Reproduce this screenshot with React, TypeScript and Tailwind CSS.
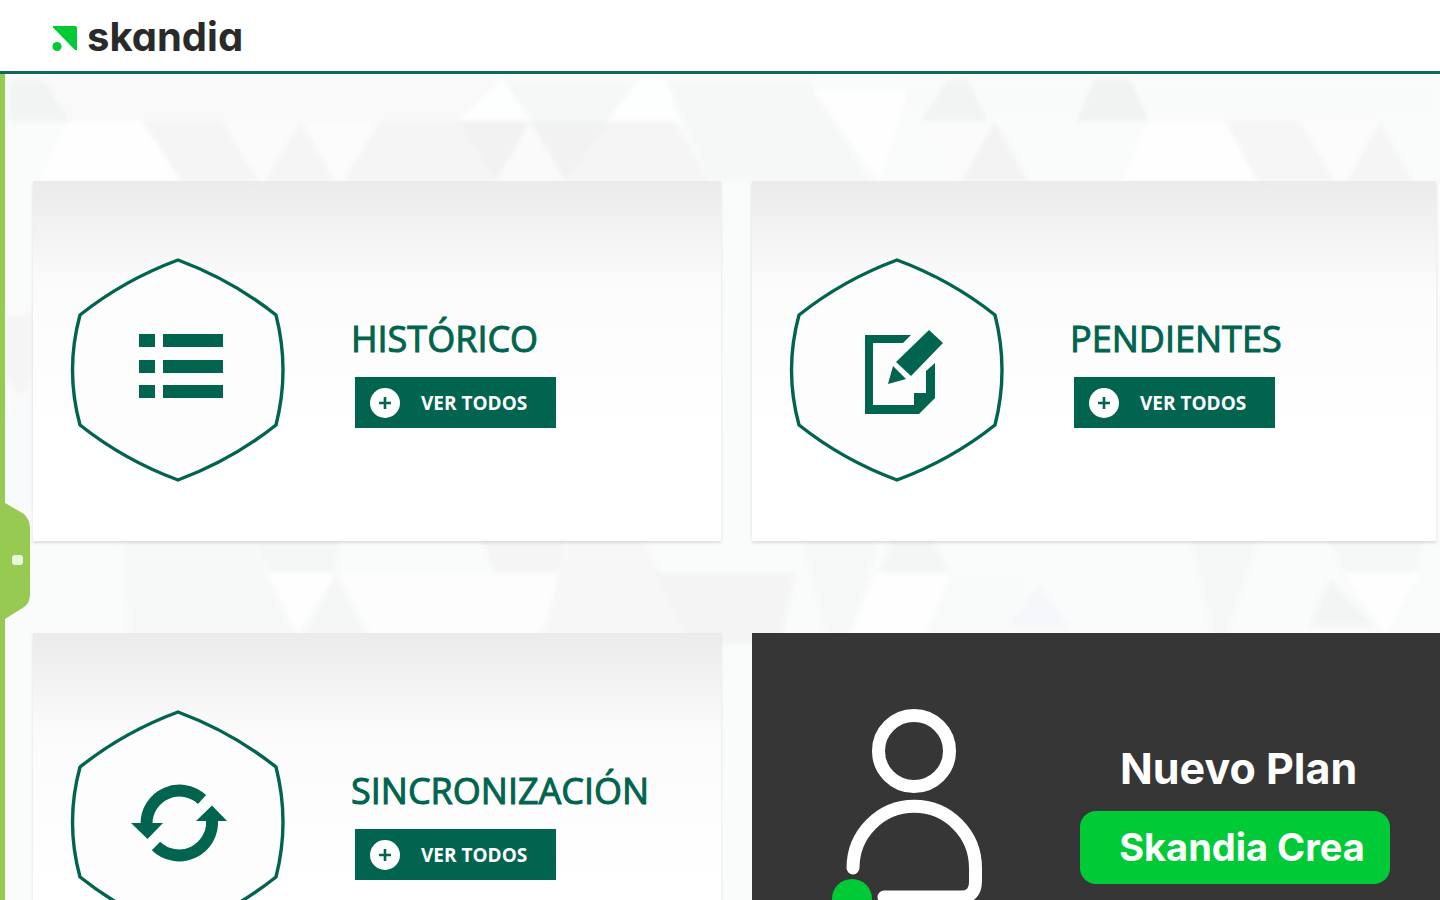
import type { ReactNode } from "react";

const facets: [string, string][] = [
  ["10,6 44,6 70,47 10,47", "#f1f4f3"],
  ["44,6 504,6 460,47 70,47", "#f9f9f9"],
  ["504,4 531,47 458,47", "#fdfefe"],
  ["504,6 640,6 610,47 531,47", "#f6f8f8"],
  ["640,4 665,4 680,47 607,47", "#fdfefe"],
  ["665,6 810,6 870,107 710,107", "#f6f8f8"],
  ["908,6 1440,6 1440,47 890,47", "#f9fafa"],
  ["68,47 142,47 181,107 40,107", "#fefefe"],
  ["142,47 222,47 260,107 181,107", "#f5f5f5"],
  ["222,47 300,47 265,107 258,107", "#fbfbfb"],
  ["300,47 335,107 265,107", "#f5f5f5"],
  ["305,47 380,47 345,107 335,107", "#fcfcfc"],
  ["380,47 530,47 497,107 343,107", "#f5f5f5"],
  ["460,47 530,47 495,107", "#f2f2f2"],
  ["530,47 610,47 565,107", "#f2f2f2"],
  ["610,47 675,47 710,107 565,107", "#f5f5f5"],
  ["530,49 565,107 497,107", "#fafafa"],
  ["813,16 908,16 880,107", "#fefefe"],
  ["948,6 968,6 987,47 922,47", "#f1f4f3"],
  ["1095,6 1130,6 1148,47 1077,47", "#f0f3f2"],
  ["928,47 993,47 961,107", "#fbfbfb"],
  ["995,47 1028,107 961,107", "#f3f3f3"],
  ["1148,47 1225,47 1257,107 1122,107", "#fefefe"],
  ["1225,47 1300,47 1335,107 1257,107", "#f6f6f6"],
  ["1302,47 1380,47 1350,107 1335,107", "#fcfcfc"],
  ["1380,47 1412,107 1348,107", "#f5f5f5"],
  ["5,240 33,240 33,350 5,300", "#f5f5f6"],
  ["5,350 33,300 33,430 5,430", "#f8f9fa"],
  ["250,460 340,460 335,499 270,499", "#f5f6f6"],
  ["120,460 250,460 300,570 130,570", "#f7f9f8"],
  ["268,500 335,500 298,559", "#fefefe"],
  ["335,500 370,570 298,570", "#f5f7f6"],
  ["340,500 565,500 540,559 372,559", "#fdfdfe"],
  ["480,460 565,460 560,499 495,499", "#f5f5f5"],
  ["570,460 640,460 700,570 540,570", "#f7f7f7"],
  ["655,499 795,499 780,570 690,570", "#f4f4f5"],
  ["800,460 880,460 850,570 828,570", "#f7f9f8"],
  ["895,460 930,460 950,499 880,499", "#f4f6f5"],
  ["877,499 950,499 925,559 850,559", "#fefefe"],
  ["950,499 1030,499 1005,570 925,570", "#f8fafa"],
  ["1038,510 1070,554 1005,554", "#f6f7fa"],
  ["1190,460 1260,460 1225,570 1215,570", "#f6f7f7"],
  ["1325,460 1425,460 1415,499 1345,499", "#f6f7f7"],
  ["1330,505 1375,552 1310,552", "#f3f5f4"],
  ["1345,499 1420,499 1385,559", "#fefefe"],
];

function FacetBackground() {
  return (
    <svg
      aria-hidden="true"
      className="absolute inset-0 h-full w-full blur-[2px]"
      viewBox="0 0 1440 826"
      preserveAspectRatio="xMidYMin slice"
    >
      {facets.map(([points, fill]) => (
        <polygon key={points} points={points} fill={fill} />
      ))}
    </svg>
  );
}

function Hexagon({ children }: { children: ReactNode }) {
  return (
    <svg aria-hidden="true" viewBox="0 0 220 228" className="h-[228px] w-[220px] shrink-0 text-[#00644f]" fill="currentColor">
      <path
        d="M110 4 Q164 24 208 59 Q222 114 208 169 Q164 204 110 224 Q56 204 12 169 Q-3 114 12 59 Q56 24 110 4Z"
        fill="#fdfdfd"
        stroke="currentColor"
        strokeWidth="3.4"
        strokeLinejoin="round"
      />
      {children}
    </svg>
  );
}

function ListGlyph() {
  return (
    <>
      {[78, 104, 129].map((y) => (
        <g key={y}>
          <rect x="71" y={y} width="16" height="13" />
          <rect x="95" y={y} width="60" height="13" />
        </g>
      ))}
    </>
  );
}

function EditGlyph() {
  return (
    <>
      <path d="M78 79H124L116 87H86V149H127V137H139V115L148 107V142L132 158H78Z" />
      <path d="M142 74L156 87L124 120L109 106Z" />
      <path d="M106 110L119 123L101 128Z" />
    </>
  );
}

function SyncGlyph() {
  return (
    <>
      <g fill="none" stroke="currentColor" strokeWidth="12">
        <path d="M134 91.500A33 33 0 0 0 78.500 116" />
        <path d="M88 138A33 33 0 0 0 144 112" />
      </g>
      <path d="M63 115H95L79.500 131Z" />
      <path d="M128 113H159L144 97.500Z" />
    </>
  );
}

function ActionCard({ title, glyph }: { title: string; glyph: ReactNode }) {
  return (
    <section className="flex h-[360px] items-start bg-linear-to-b from-[#ebebeb] via-[#fbfbfb] via-28% to-white to-70% pt-[75px] pl-[35px] shadow-[0_2px_3px_rgba(0,0,0,0.12)] even:mr-1">
      <Hexagon>{glyph}</Hexagon>
      <div className="ml-[63px] pt-[58px]">
        <h2 className="font-['Open_Sans',sans-serif] text-[36px] leading-[50px] whitespace-nowrap text-[#00644f] [-webkit-text-stroke:1px_#00644f]">{title}</h2>
        <button
          type="button"
          className="mt-[13px] ml-1 flex h-[51px] w-[201px] items-center bg-[#00644f] pt-px pl-[15px] font-['Open_Sans',sans-serif] text-[19px] font-bold text-white"
        >
          <svg aria-hidden="true" viewBox="0 0 30 30" className="mr-[21px] size-[30px]">
            <circle cx="15" cy="15" r="15" fill="#fff" />
            <path d="M15 9V21M9 15H21" stroke="#00644f" strokeWidth="2.600" />
          </svg>
          VER TODOS
        </button>
      </div>
    </section>
  );
}

function NewPlanCard() {
  return (
    <section className="flex h-[360px] items-start bg-[#363636] pt-[72px] pl-[78px] font-['Inter',sans-serif] text-white">
      <svg aria-hidden="true" viewBox="830 704 160 220" className="h-[220px] w-[160px] shrink-0" fill="none">
        <g stroke="#fff" strokeWidth="13" strokeLinecap="round">
          <circle cx="914" cy="750" r="35.500" />
          <path d="M853 867A61 61.500 0 0 1 975.500 867V880Q975.500 896 961 896H884" />
        </g>
        <circle cx="852" cy="898" r="20" fill="#00cb37" />
      </svg>
      <div className="ml-[90px] pt-[38px]">
        <h2 className="pl-10 text-[43px] leading-[50px] font-bold whitespace-nowrap">Nuevo Plan</h2>
        <button type="button" className="mt-[18px] h-[73px] w-[310px] rounded-2xl bg-[#00cb37] pl-[14px] text-[38px] font-bold whitespace-nowrap">
          Skandia Crea
        </button>
      </div>
    </section>
  );
}

export default function App() {
  return (
    <div className="flex h-screen flex-col overflow-hidden bg-white">
      <header className="flex h-[74px] shrink-0 items-center border-b-[3px] border-[#116a58] pl-[51px]">
        <a href="#inicio" className="flex items-center gap-2 pt-1 text-[#2a2a2a]">
          <svg aria-hidden="true" viewBox="0 0 28 28" className="size-[28px]" fill="#00cb37">
            <path d="M2 2H24Q26 2 26 4V26Q25 27 23 25L2 3.500Z" />
            <circle cx="6" cy="22.500" r="4.600" />
          </svg>
          <span className="pb-[2px] font-['Inter',sans-serif] text-[40px] leading-[40px] font-bold [font-feature-settings:'cv11']">skandia</span>
        </a>
      </header>
      <div className="relative flex min-h-0 grow overflow-hidden bg-[#fafbfb]">
        <FacetBackground />
        <aside className="relative z-10 w-[5px] shrink-0 bg-[#96ca52]">
          <button type="button" aria-label="Abrir menú" className="absolute top-[426px] left-0">
            <svg aria-hidden="true" viewBox="0 0 30 122" className="h-[122px] w-[30px]">
              <path d="M0 0L24 14Q30 20 30 28V94Q30 103 24 107L5 119L0 122Z" fill="#96ca52" />
              <rect x="12" y="55" width="11" height="10" rx="3" fill="#eaf7da" />
            </svg>
          </button>
        </aside>
        <main className="relative grid grow grid-cols-2 content-start gap-x-[31px] gap-y-[92px] pt-[107px] pl-[28px]">
          <ActionCard title="HISTÓRICO" glyph={<ListGlyph />} />
          <ActionCard title="PENDIENTES" glyph={<EditGlyph />} />
          <ActionCard title="SINCRONIZACIÓN" glyph={<SyncGlyph />} />
          <NewPlanCard />
        </main>
      </div>
    </div>
  );
}
